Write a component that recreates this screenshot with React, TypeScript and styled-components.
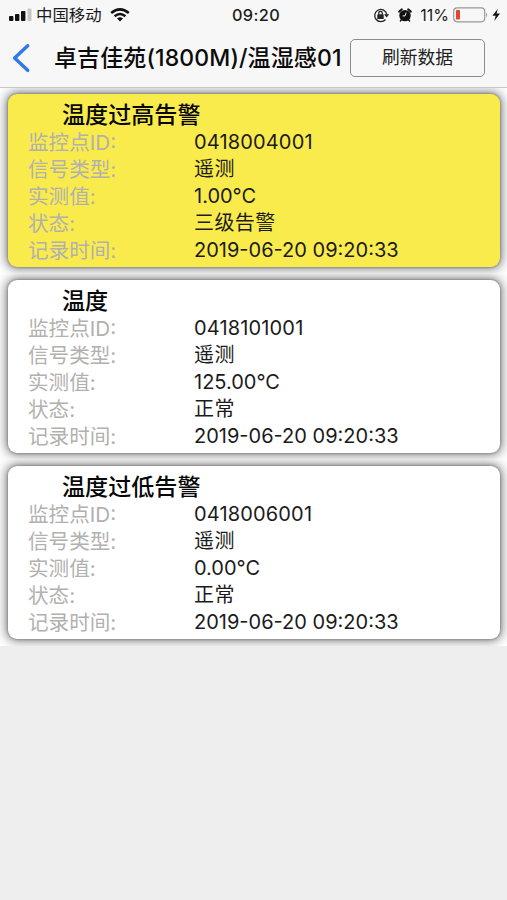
import React from "react";
import styled, { createGlobalStyle } from "styled-components";

const Global = createGlobalStyle`
  * { box-sizing: border-box; }
  body { margin: 0; background: #eeeeee; }
`;

const Screen = styled.div`
  width: 507px;
  height: 900px;
  overflow: hidden;
  background: #eeeeee;
  color: #1b1b1b;
  font-family: Inter, "Noto Sans CJK SC", sans-serif;
  white-space: nowrap;
`;

const StatusBar = styled.div`
  height: 30px;
  background: #f7f7f7;
  display: grid;
  grid-template-columns: 1fr auto 1fr;
  align-items: center;
  padding: 0 6px 0 9px;
  font-size: 16px;
`;

const StatusGroup = styled.div<{ $end?: boolean }>`
  display: flex;
  align-items: center;
  justify-content: ${(p) => (p.$end ? "flex-end" : "flex-start")};
  svg { display: block; flex: none; }
`;

const Carrier = styled.span`
  margin: 0 8px 0 4px;
  font-size: 16.4px;
  line-height: 30px;
`;

const Clock = styled.span`
  padding-left: 2px;
  font-size: 16.3px;
  font-weight: 500;
  letter-spacing: 0.35px;
`;

const Percent = styled.span`
  margin: 0 4px 0 8px;
  font-size: 16px;
`;

const LockIcon = styled.svg`
  margin-right: 8px;
`;

const NavBar = styled.header`
  height: 58px;
  background: #f7f7f7;
  border-bottom: 1px solid #c9c9c9;
  display: flex;
  align-items: center;
  padding: 0 22px 2px 12px;
`;

const BackButton = styled.button`
  border: 0;
  padding: 0;
  background: none;
  width: 42px;
  height: 30px;
  svg { display: block; }
`;

const PageTitle = styled.h1`
  margin: 0;
  flex: 1;
  font-size: 23px;
  line-height: 30px;
  font-weight: 500;
  letter-spacing: 0.12px;
  color: #0b0b0b;
`;

const RefreshButton = styled.button`
  width: 135px;
  height: 38px;
  padding: 1px 0 0;
  border: 1.5px solid #8c8c8c;
  border-radius: 5px;
  background: #f8f8f8;
  color: #222;
  font: 400 17.8px/34px Inter, "Noto Sans CJK SC", sans-serif;
`;

const CardSlot = styled.div`
  height: 186px;
  padding: 6px 7px 7px 8px;
  overflow: hidden;
  background: #fff;
`;

const Card = styled.section<{ $alarm?: boolean }>`
  height: 173px;
  padding: 7px 20px 0;
  border-radius: 9px;
  background: ${(p) => (p.$alarm ? "#faeb4d" : "#ffffff")};
  box-shadow: 0 0 11px 2px rgba(0, 0, 0, 0.5), 0 0 3px 0 rgba(0, 0, 0, 0.4);
`;

const CardTitle = styled.h2`
  margin: 0 0 0 34px;
  font-size: 23.1px;
  line-height: 28px;
  font-weight: 500;
  color: #080808;
`;

const Row = styled.div`
  display: grid;
  grid-template-columns: 166px 1fr;
  height: 27px;
  line-height: 27px;
  font-size: 20px;
`;

const Label = styled.span`
  color: #b1b1ae;
  font-size: 20.6px;
  font-weight: 400;
`;

const Value = styled.span<{ $spacing?: number }>`
  letter-spacing: ${(p) => p.$spacing ?? 0}px;
`;

type Reading = { title: string; id: string; value: string; status: string; alarm?: boolean };

const readings: Reading[] = [
  { title: "温度过高告警", id: "0418004001", value: "1.00°C", status: "三级告警", alarm: true },
  { title: "温度", id: "0418101001", value: "125.00°C", status: "正常" },
  { title: "温度过低告警", id: "0418006001", value: "0.00°C", status: "正常" },
];

const Signal = () => (
  <svg width="23" height="14" viewBox="0 0 23 14" fill="#111">
    <rect x="0" y="8" width="4.4" height="5" rx="1" />
    <rect x="6" y="6" width="4.4" height="7" rx="1" />
    <rect x="12" y="3" width="4.4" height="10" rx="1" />
    <rect x="18.5" y="0.5" width="4" height="12.5" rx="1" fill="#c5c5c5" />
  </svg>
);

const Wifi = () => (
  <svg width="20" height="14" viewBox="0 0 20 14" fill="none" stroke="#111" strokeWidth="2.5">
    <path d="M1.2 5Q10-2.3 18.8 5" />
    <path d="M4.6 8.2Q10 3.7 15.4 8.2" />
    <path d="M7 10.4Q10 8.1 13 10.4L10 13.5Z" fill="#111" stroke="none" />
  </svg>
);

const RotationLock = () => (
  <LockIcon width="17" height="15" viewBox="0 0 17 15" fill="none" stroke="#222" strokeWidth="1.3">
    <path d="M12.5 11.5A6.1 6.1 0 1 1 13.8 6.3" />
    <path d="M11 6.3h5.2l-2.6 3.2z" fill="#222" stroke="none" />
    <rect x="4.3" y="6.3" width="6.4" height="4.7" rx=".6" fill="#222" stroke="none" />
    <path d="M5.7 6.5V5.2a1.8 1.8 0 0 1 3.6 0v1.3" />
  </LockIcon>
);

const Alarm = () => (
  <svg width="14" height="14" viewBox="0 0 14 14">
    <circle cx="7" cy="7.6" r="5.7" fill="#111" />
    <path d="M1.2 3.7A8 8 0 0 1 3.8 1.4M10.2 1.4A8 8 0 0 1 12.8 3.7" fill="none" stroke="#111" strokeWidth="2" strokeLinecap="round" />
    <path d="M3.4 11.8l-1 1.2M10.6 11.8l1 1.2" fill="none" stroke="#111" strokeWidth="1.4" strokeLinecap="round" />
    <path d="M8.2 4.6L7 7.9H4.6" fill="none" stroke="#f7f7f7" strokeWidth="1" />
  </svg>
);

const Battery = () => (
  <svg width="48" height="16" viewBox="0 0 48 16">
    <rect x=".7" y=".8" width="31" height="14" rx="3.5" fill="none" stroke="#999" strokeWidth="1.2" />
    <rect x="3" y="3" width="4" height="9.6" rx=".8" fill="#eb4133" />
    <path d="M33.2 5.5q2 2.3 0 4.7z" fill="#999" />
    <path d="M44.7 2L39.4 8.7h3.3L41.2 14l5.8-7.4h-3.4z" fill="#111" />
  </svg>
);

export default function App() {
  return (
    <Screen>
      <Global />
      <StatusBar>
        <StatusGroup>
          <Signal />
          <Carrier>中国移动</Carrier>
          <Wifi />
        </StatusGroup>
        <Clock>09:20</Clock>
        <StatusGroup $end>
          <RotationLock />
          <Alarm />
          <Percent>11%</Percent>
          <Battery />
        </StatusGroup>
      </StatusBar>
      <NavBar>
        <BackButton aria-label="返回">
          <svg width="20" height="30" viewBox="0 0 20 30" fill="none" stroke="#3478e8" strokeWidth="3.5" strokeLinecap="round" strokeLinejoin="round">
            <path d="M15.7 2.8L2.6 15l13.1 12.3" />
          </svg>
        </BackButton>
        <PageTitle>卓吉佳苑(1800M)/温湿感01</PageTitle>
        <RefreshButton>刷新数据</RefreshButton>
      </NavBar>
      <main>
        {readings.map((r) => (
          <CardSlot key={r.id}>
            <Card $alarm={r.alarm}>
              <CardTitle>{r.title}</CardTitle>
              <Row><Label>监控点ID:</Label><Value $spacing={0.15}>{r.id}</Value></Row>
              <Row><Label>信号类型:</Label><Value $spacing={0.4}>遥测</Value></Row>
              <Row><Label>实测值:</Label><Value>{r.value}</Value></Row>
              <Row><Label>状态:</Label><Value $spacing={0.4}>{r.status}</Value></Row>
              <Row><Label>记录时间:</Label><Value>2019-06-20 09:20:33</Value></Row>
            </Card>
          </CardSlot>
        ))}
      </main>
    </Screen>
  );
}
